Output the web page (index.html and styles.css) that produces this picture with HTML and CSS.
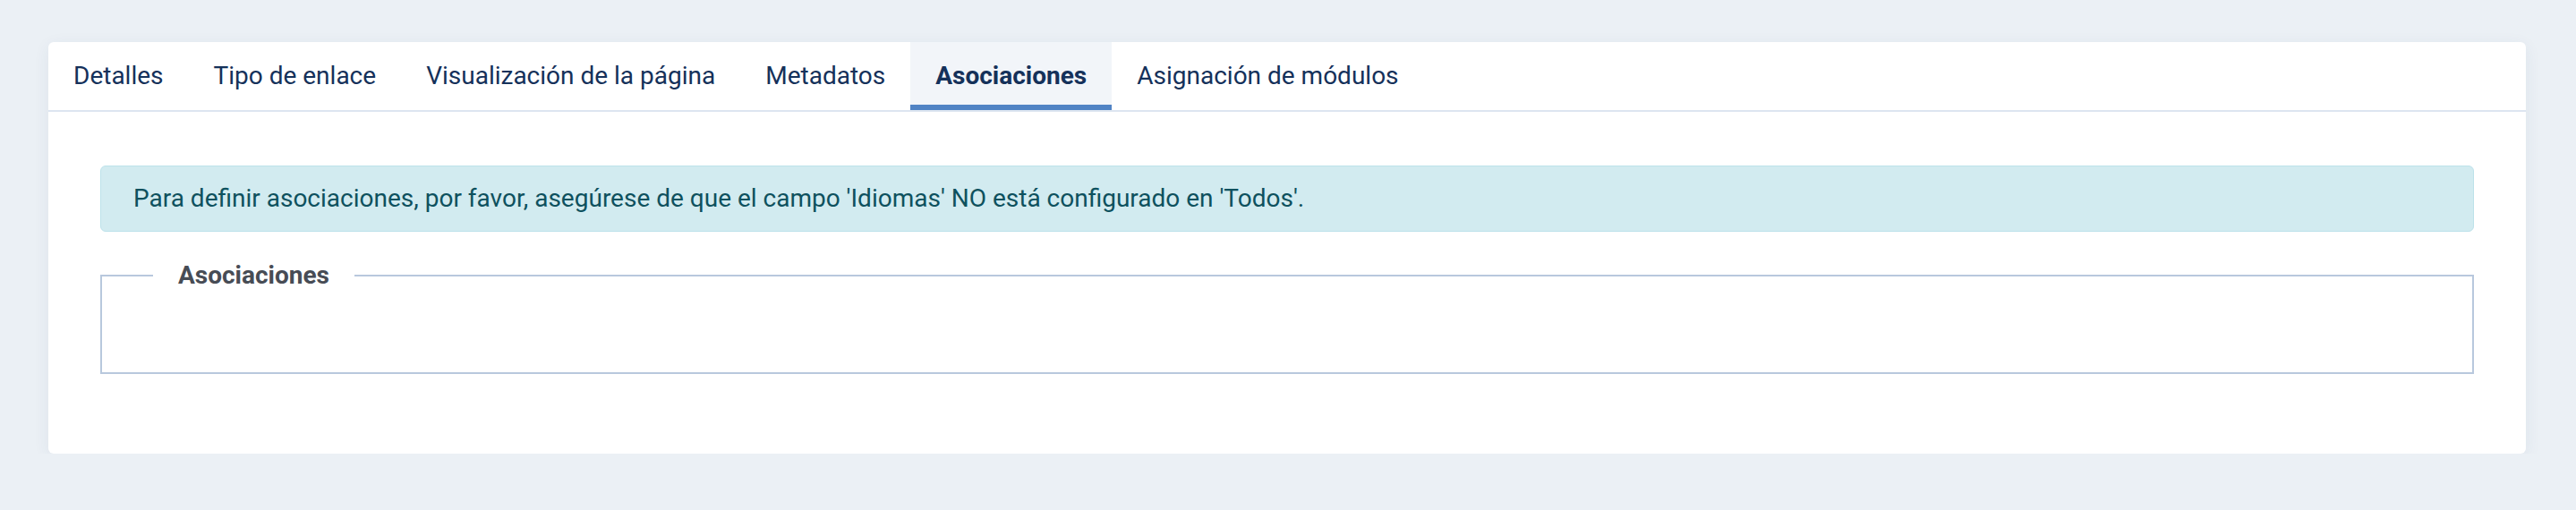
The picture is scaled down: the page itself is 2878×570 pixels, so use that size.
FILE: index.html
```html
<!DOCTYPE html>
<html lang="es">
<head>
<meta charset="utf-8">
<title>Asociaciones</title>
<link rel="stylesheet" href="styles.css">
</head>
<body>
<div class="page">
  <div class="card">
    <div class="tabs">
      <div class="tab">Detalles</div>
      <div class="tab">Tipo de enlace</div>
      <div class="tab">Visualización de la página</div>
      <div class="tab">Metadatos</div>
      <div class="tab active">Asociaciones</div>
      <div class="tab">Asignación de módulos</div>
    </div>
    <div class="card-body">
      <div class="alert">Para definir asociaciones, por favor, asegúrese de que el campo 'Idiomas' NO está configurado en 'Todos'.</div>
      <fieldset class="group">
        <legend class="group-title">Asociaciones</legend>
      </fieldset>
    </div>
  </div>
</div>
</body>
</html>
```
FILE: styles.css
```css
* { box-sizing: border-box; }
html, body {
  margin: 0;
  padding: 0;
  background: #ebf0f5;
  font-family: Roboto, "Liberation Sans", Arial, sans-serif;
}
.page {
  padding: 47px 56px 0 54px;
}
.card {
  background: #ffffff;
  border-radius: 6px;
  box-shadow: 0 4px 18px rgba(40, 70, 120, 0.07);
  overflow: hidden;
}
.tabs {
  display: flex;
  border-bottom: 2px solid #dde5f0;
}
.tab {
  padding: 17px 28px;
  font-size: 28px;
  line-height: 42px;
  color: #15315a;
  white-space: nowrap;
}
.tab.active {
  background: #f2f5f9;
  font-weight: 700;
  box-shadow: inset 0 -6px 0 #5083c4;
}
.card-body {
  padding: 60px 58px 60px 58px;
}
.alert {
  background: #d2ebf0;
  border: 1px solid #bde2ea;
  border-radius: 6px;
  color: #0e515e;
  font-size: 28px;
  line-height: 42px;
  padding: 15px 36px;
  margin-bottom: 28px;
}
.group {
  margin: 0 0 29px 0;
  border: 2px solid #b8c8dd;
  padding: 29px 57px 58px;
  min-width: 0;
}
.group-title {
  font-size: 28px;
  line-height: 42px;
  font-weight: 700;
  color: #474c55;
  padding: 0 28px;
}
```
